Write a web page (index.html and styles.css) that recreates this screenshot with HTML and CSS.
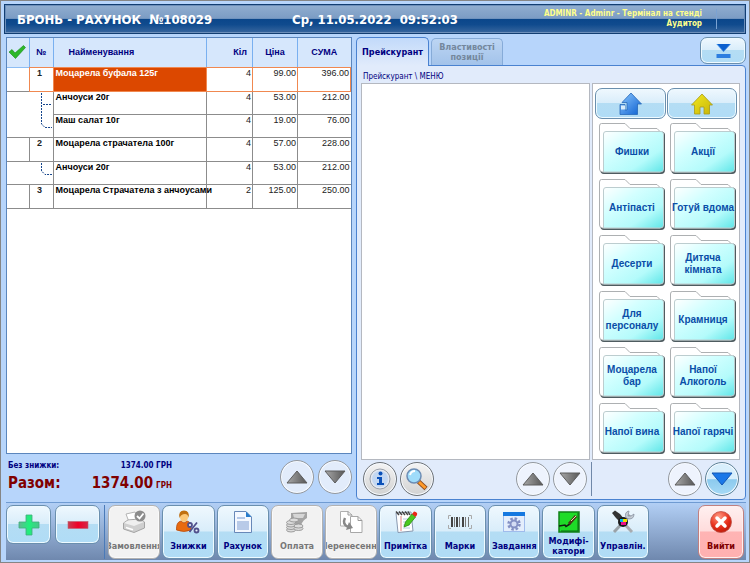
FILE: index.html
```html
<!DOCTYPE html>
<html lang="uk">
<head>
    <meta charset="UTF-8">
    <meta name="viewport" content="width=device-width, initial-scale=1.0">
    <title>Бронь - Рахунок №108029</title>
    <link rel="stylesheet" href="styles.css">
</head>
<body>
    <!-- Shared shapes -->
    <svg class="defs" width="0" height="0" aria-hidden="true">
        <defs>
            <linearGradient id="folder-fill" x1="0" y1="0" x2="1" y2="1">
                <stop offset="0" stop-color="#ffffff"/>
                <stop offset="0.35" stop-color="#d2ffff"/>
                <stop offset="0.7" stop-color="#b4fbfb"/>
                <stop offset="1" stop-color="#5fe6e8"/>
            </linearGradient>
            <linearGradient id="blue-fill" x1="0" y1="0" x2="1" y2="1">
                <stop offset="0" stop-color="#8cc8ff"/>
                <stop offset="1" stop-color="#0b5fd0"/>
            </linearGradient>
            <linearGradient id="gray-fill" x1="0" y1="0" x2="1" y2="0">
                <stop offset="0" stop-color="#a8a8a8"/>
                <stop offset="1" stop-color="#565656"/>
            </linearGradient>
            <linearGradient id="yellow-fill" x1="0" y1="0" x2="1" y2="1">
                <stop offset="0" stop-color="#f2ea20"/>
                <stop offset="1" stop-color="#c8b408"/>
            </linearGradient>
            <linearGradient id="green-fill" x1="0" y1="0" x2="1" y2="0">
                <stop offset="0" stop-color="#62b890"/>
                <stop offset="0.5" stop-color="#1ff07c"/>
                <stop offset="1" stop-color="#4cc48a"/>
            </linearGradient>
            <linearGradient id="red-fill" x1="0" y1="0" x2="1" y2="0">
                <stop offset="0" stop-color="#c83c50"/>
                <stop offset="0.5" stop-color="#f00028"/>
                <stop offset="1" stop-color="#d42848"/>
            </linearGradient>
            <radialGradient id="exit-fill" cx="0.4" cy="0.25" r="0.8">
                <stop offset="0" stop-color="#ff9a84"/>
                <stop offset="0.6" stop-color="#e8301c"/>
                <stop offset="1" stop-color="#b81808"/>
            </radialGradient>
            <symbol id="folder" viewBox="0 0 68 53" preserveAspectRatio="none">
                <path d="M2 47Q2 52 6 52H63Q67 52 67 48V13Q67 10 64 9.500V49H2Z" fill="#4f5c60"/>
                <path d="M1.500 47V4Q1.500 1.500 3.500 1.500H27L32 6.500H59L62 9.500V50H4.500Q1.500 50 1.500 47Z" fill="#fff" stroke="#adb0b2"/>
                <path d="M5.500 50V12Q5.500 9.500 8 9.500H63Q65.500 9.500 65.500 12V47Q65.500 50 62.500 50Z" fill="url(#folder-fill)" stroke="#bccdcf"/>
            </symbol>
            <symbol id="tri-up" viewBox="0 0 22 14">
                <path d="M11 1L21 13H1Z" fill="url(#gray-fill)" stroke="#5c5c5c"/>
            </symbol>
            <symbol id="tri-down" viewBox="0 0 22 14">
                <path d="M1 1H21L11 13Z" fill="url(#gray-fill)" stroke="#5c5c5c"/>
            </symbol>
        </defs>
    </svg>

    <div class="window">
        <header class="titlebar">
            <h1>БРОНЬ - РАХУНОК&nbsp; №108029</h1>
            <div class="clock">Ср, 11.05.2022&nbsp; 09:52:03</div>
            <div class="user">ADMINR - Adminr - Термінал на стенді<br>Аудитор</div>
        </header>

        <main class="workspace">
            <section class="bill">
                <div class="bill-list">
                    <table>
                        <colgroup>
                            <col class="c-mark"><col class="c-num"><col class="c-name">
                            <col class="c-qty"><col class="c-price"><col class="c-sum">
                        </colgroup>
                        <thead>
                            <tr>
                                <th>
                                    <svg width="18" height="14" viewBox="0 0 18 14"><path d="M1 7L4 4.500L7 8L15.500 0.500L17.500 2.500L7.500 13.500Z" fill="#2db82a" stroke="#168a18" stroke-width="0.600"/></svg>
                                </th>
                                <th>№</th>
                                <th class="left">Найменування</th>
                                <th class="right">Кіл</th>
                                <th>Ціна</th>
                                <th>СУМА</th>
                            </tr>
                        </thead>
                        <tbody>
                            <tr class="dish selected">
                                <td></td><td class="num">1</td><td class="name">Моцарела буфала 125г</td><td>4</td><td>99.00</td><td>396.00</td>
                            </tr>
                            <tr>
                                <td class="tree" colspan="2" rowspan="2">
                                    <svg width="46" height="44" viewBox="0 0 46 44"><path d="M34.500 1V32L38 35.500H45M36 12.500H45" fill="none" stroke="#15458c" stroke-width="1" stroke-dasharray="2 1"/></svg>
                                </td>
                                <td class="name">Анчоуси 20г</td><td>4</td><td>53.00</td><td>212.00</td>
                            </tr>
                            <tr>
                                <td class="name">Маш салат 10г</td><td>4</td><td>19.00</td><td>76.00</td>
                            </tr>
                            <tr class="dish">
                                <td></td><td class="num">2</td><td class="name">Моцарела страчатела 100г</td><td>4</td><td>57.00</td><td>228.00</td>
                            </tr>
                            <tr>
                                <td class="tree" colspan="2">
                                    <svg width="46" height="20" viewBox="0 0 46 20"><path d="M34.500 1V9L38 12.500H45" fill="none" stroke="#15458c" stroke-width="1" stroke-dasharray="2 1"/></svg>
                                </td>
                                <td class="name">Анчоуси 20г</td><td>4</td><td>53.00</td><td>212.00</td>
                            </tr>
                            <tr class="dish">
                                <td></td><td class="num">3</td><td class="name">Моцарела Страчатела з анчоусами</td><td>2</td><td>125.00</td><td>250.00</td>
                            </tr>
                        </tbody>
                    </table>
                </div>
                <div class="totals">
                    <dl>
                        <dt class="small">Без знижки:</dt>
                        <dd class="small">1374.00 ГРН</dd>
                        <dt>Разом:</dt>
                        <dd>1374.00<span>ГРН</span></dd>
                    </dl>
                    <button class="round" type="button" aria-label="Вгору"><svg width="22" height="14"><use href="#tri-up"/></svg></button>
                    <button class="round" type="button" aria-label="Вниз"><svg width="22" height="14"><use href="#tri-down"/></svg></button>
                </div>
            </section>

            <section class="catalog">
                <div class="tabs">
                    <button class="tab active" type="button">Прейскурант</button>
                    <button class="tab" type="button">Властивості позиції</button>
                    <button class="glass collapse" type="button" aria-label="Згорнути">
                        <svg width="15" height="14" viewBox="0 0 15 14"><path d="M0 0H15L7.500 8Z" fill="url(#blue-fill)"/><path d="M1 0H14L7.500 7Z" fill="#0a5fce"/><rect x="0.500" y="10" width="14" height="4" fill="#2c7ee0"/></svg>
                    </button>
                </div>
                <div class="panel">
                    <p class="path">Прейскурант \ МЕНЮ</p>
                    <div class="panel-body">
                        <div class="items"></div>
                        <div class="groups">
                            <div class="nav">
                                <button class="glass" type="button" aria-label="На рівень вище">
                                    <svg width="24" height="24" viewBox="0 0 24 24"><path d="M13 1L23.500 12H19.500V22.500H2V12.500H7V18H9V10.500H4Z" fill="url(#blue-fill)" stroke="#2668b8" stroke-width="0.800"/><path d="M3 13.500H7V17.500H3Z" fill="#d9edfa"/></svg>
                                </button>
                                <button class="glass" type="button" aria-label="На початок">
                                    <svg width="22" height="22" viewBox="0 0 22 22"><path d="M11 1L21.500 12H18.500V21H13V14H9V21H3.500V12H0.500Z" fill="url(#yellow-fill)" stroke="#a89a18" stroke-width="0.800"/></svg>
                                </button>
                            </div>
                            <div class="folders" id="folders">
                                <!-- Folder buttons are added by the script -->
                            </div>
                        </div>
                    </div>
                    <div class="panel-foot">
                        <div class="foot-items">
                            <button class="round gray" type="button" aria-label="Інформація">
                                <svg width="22" height="22" viewBox="0 0 22 22"><circle cx="11" cy="11" r="10" fill="#e4e8f0" stroke="#9aa0aa"/><circle cx="11" cy="11" r="8" fill="#c3d7f2"/><circle cx="11.500" cy="5.500" r="2" fill="#0b50b8"/><path d="M8 9H13V15H15V17H8V15H10V11H8Z" fill="#0b50b8"/></svg>
                            </button>
                            <button class="round gray" type="button" aria-label="Пошук">
                                <svg width="24" height="24" viewBox="0 0 24 24"><path d="M13.500 14.500L21 21.500" stroke="#8a4a20" stroke-width="4.500"/><path d="M14 15L20.500 21" stroke="#ff9a28" stroke-width="3"/><circle cx="9" cy="9" r="7" fill="#9fdcfa" stroke="#6c8cb4" stroke-width="1.500"/><path d="M5 8Q6 4 10 4" fill="none" stroke="#fff" stroke-width="2"/></svg>
                            </button>
                            <span class="spacer"></span>
                            <button class="round pale" type="button" aria-label="Вгору"><svg width="22" height="14"><use href="#tri-up"/></svg></button>
                            <button class="round pale" type="button" aria-label="Вниз"><svg width="22" height="14"><use href="#tri-down"/></svg></button>
                        </div>
                        <div class="foot-groups">
                            <button class="round pale" type="button" aria-label="Вгору"><svg width="22" height="14"><use href="#tri-up"/></svg></button>
                            <button class="round blue" type="button" aria-label="Вниз"><svg width="22" height="14" viewBox="0 0 22 14"><path d="M1 1H21L11 13Z" fill="#1a78e8" stroke="#1256b4"/></svg></button>
                        </div>
                    </div>
                </div>
            </section>
        </main>

        <footer class="toolbar">
            <button class="glass step" type="button" aria-label="Додати">
                <svg width="22" height="22" viewBox="0 0 22 22"><path d="M8 1H14V8H21V14H14V21H8V14H1V8H8Z" fill="url(#green-fill)" stroke="#3cae7c" stroke-width="0.800"/></svg>
            </button>
            <button class="glass step" type="button" aria-label="Відняти">
                <svg width="22" height="22" viewBox="0 0 22 22"><rect x="1" y="7.500" width="20" height="7" fill="url(#red-fill)" stroke="#c06070" stroke-width="0.600"/></svg>
            </button>
            <div class="tools">
                <button class="glass tool" type="button" disabled>
                    <svg width="24" height="24" viewBox="0 0 24 24"><path d="M4 4L13 2L17 10L7 12Z" fill="#fff" stroke="#b4b4b4"/><path d="M1.500 13L6 10L17 9L22.500 12V18L12 22.500L1.500 19Z" fill="#cfcfcf" stroke="#a4a4a4"/><path d="M2 13L12 16L22 12L17 9.500L6 10.500Z" fill="#efefef"/><path d="M4 17.500L11 19.800" stroke="#fff" stroke-width="1.500"/><circle cx="18" cy="6" r="5.500" fill="#8c8c8c"/><path d="M15 6L17.500 8.500L21.500 3.500" fill="none" stroke="#fff" stroke-width="1.800"/></svg>
                    <span>Замовлення</span>
                </button>
                <button class="glass tool" type="button">
                    <svg width="24" height="24" viewBox="0 0 24 24"><path d="M0.500 20Q0 12 5 11L8 13L11 11Q16 12 15 20Q8 23 0.500 20Z" fill="#e86a10" stroke="#b84c0c" stroke-width="0.800"/><ellipse cx="8" cy="7" rx="4" ry="5" fill="#fcc878"/><path d="M3.500 8Q2 0.500 8 0.500T12.500 8Q12 4 9 4Q5 4 3.500 8Z" fill="#c07010"/><g fill="#e8f0fc" stroke="#50508c" stroke-width="1.800"><circle cx="14" cy="15" r="2"/><circle cx="20.500" cy="20.500" r="2"/><path d="M21 12.500L13.500 22"/></g></svg>
                    <span>Знижки</span>
                </button>
                <button class="glass tool" type="button">
                    <svg width="24" height="24" viewBox="0 0 24 24"><path d="M3.500 1.500H15L20.500 7V22.500H3.500Z" fill="#f4f8ff" stroke="#6888b8"/><path d="M15 1.500V7H20.500Z" fill="#287ccc"/><rect x="6" y="7" width="8" height="2" fill="#b4c8e8"/><rect x="6" y="11" width="12" height="9" fill="#b8cae8"/></svg>
                    <span>Рахунок</span>
                </button>
                <button class="glass tool" type="button" disabled>
                    <svg width="24" height="24" viewBox="0 0 24 24"><path d="M6 3L22 2V8Q18 10 16 15H11L6 10Z" fill="#a4a4a4"/><path d="M8 4L20 4L18 8L9 8Z" fill="#d6d6d6"/><g fill="#dcdcdc" stroke="#8c8c8c" stroke-width="0.800"><ellipse cx="6" cy="20" rx="4.500" ry="2"/><ellipse cx="6" cy="17.500" rx="4.500" ry="2"/><ellipse cx="6" cy="15" rx="4.500" ry="2"/><ellipse cx="6" cy="12.500" rx="4.500" ry="2"/><ellipse cx="13.500" cy="18.500" rx="4.500" ry="2"/><ellipse cx="13.500" cy="16" rx="4.500" ry="2"/><ellipse cx="9" cy="10" rx="4.500" ry="2"/></g></svg>
                    <span>Оплата</span>
                </button>
                <button class="glass tool" type="button" disabled>
                    <svg width="24" height="24" viewBox="0 0 24 24"><path d="M1.500 1.500H9L13 5V16H1.500Z" fill="#fff" stroke="#b0b0b0"/><path d="M11.500 6.500H19L23 10.500V22.500H11.500Z" fill="#fff" stroke="#a8a8a8"/><path d="M19 6.500V10.500H23M9 1.500V5H13" fill="none" stroke="#999"/><path d="M6 8Q3 14 9 17" fill="none" stroke="#888" stroke-width="2.500"/><path d="M7 20L14 18L10 12Z" fill="#888"/></svg>
                    <span>Перенесення</span>
                </button>
                <button class="glass tool" type="button">
                    <svg width="24" height="24" viewBox="0 0 24 24"><path d="M2 3L17 2L19 21L4 22.500Z" fill="#fff" stroke="#8898b0"/><path d="M7 6V21" stroke="#e08080"/><path d="M9 9H16M9 12H16M9 15H16M9 18H16" stroke="#b8cce4"/><path d="M2 1.500L5 5M5 1.500L8 5M8 1.500L11 5M11 1.500L14 5M14 1.500L16 5" stroke="#444" stroke-width="1.500"/><path d="M10 17L11.500 12L18 4L21.500 7L15 15Z" fill="#4cc820" stroke="#2a8c14" stroke-width="0.800"/><path d="M18 4L20 1.500Q24 2 23 5L21.500 7Z" fill="#e82818"/></svg>
                    <span>Примітка</span>
                </button>
                <button class="glass tool" type="button">
                    <svg width="24" height="24" viewBox="0 0 24 24"><path d="M3 5.500H0.500V9M21 5.500H23.500V9M3 18.500H0.500V15M21 18.500H23.500V15" fill="none" stroke="#aaa"/><path d="M4 7V17M9 7V17M15 7V17" stroke="#444" stroke-width="2"/><path d="M6.500 7V17M11.500 7V17M17.500 7V17M20.500 7V17" stroke="#777"/></svg>
                    <span>Марки</span>
                </button>
                <button class="glass tool" type="button">
                    <svg width="24" height="24" viewBox="0 0 24 24"><rect x="1.500" y="2.500" width="21" height="19" fill="#e4eefc" stroke="#a0bcec"/><rect x="1" y="2" width="22" height="4" fill="#1478e0"/><circle cx="12" cy="14" r="5.500" fill="none" stroke="#8490c4" stroke-width="2.500" stroke-dasharray="2.500 1.800"/><circle cx="12" cy="14" r="3.500" fill="#d4dcf4" stroke="#8490c4" stroke-width="2"/></svg>
                    <span>Завдання</span>
                </button>
                <button class="glass tool" type="button">
                    <svg width="24" height="24" viewBox="0 0 24 24"><rect x="2" y="2" width="20" height="20" fill="#1edc28" stroke="#108018" stroke-width="1.500"/><path d="M21 3V21H4" fill="none" stroke="#0a6812"/><path d="M2 16L8 15L9 16.500L13 14" fill="none" stroke="#102010" stroke-width="1.500"/><path d="M12 14L19 6" stroke="#4a3818" stroke-width="3"/><path d="M14 11L19 6" stroke="#e8d8b0"/></svg>
                    <span>Модифі-<br>катори</span>
                </button>
                <button class="glass tool" type="button">
                    <svg width="24" height="24" viewBox="0 0 24 24"><path d="M3 22L19 5" stroke="#9aa2a8" stroke-width="3"/><path d="M17 6L18 1Q13 2 15 8L18 9Q23 9 23 4L20 6Z" fill="#c4ccd4" stroke="#8890a0" stroke-width="0.800"/><path d="M5 5L21 22" stroke="#a8acb0" stroke-width="3"/><path d="M1 3L4 0.500L9 4L13 9L9 12L5 8Z" fill="#333"/><circle cx="12" cy="12" r="5" fill="#1a1a1a"/><path d="M9 9H12V12H9Z" fill="#00b8f0"/><path d="M12 9H16V12H12Z" fill="#f0e000"/><path d="M10 12H15V15H10Z" fill="#e8108c"/></svg>
                    <span>Управлін.</span>
                </button>
            </div>
            <button class="glass tool exit" type="button">
                <svg width="24" height="24" viewBox="0 0 24 24"><circle cx="12" cy="12" r="10.500" fill="url(#exit-fill)" stroke="#c05048" stroke-width="0.800"/><path d="M8 8L16 16M16 8L8 16" stroke="#fff" stroke-width="3.500" stroke-linecap="round"/></svg>
                <span>Вийти</span>
            </button>
        </footer>
    </div>

    <script>
        const groups = [
            'Фишки', 'Акції',
            'Антіпасті', 'Готуй вдома',
            'Десерти', 'Дитяча кімната',
            'Для персоналу', 'Крамниця',
            'Моцарела бар', 'Напої Алкоголь',
            'Напої вина', 'Напої гарячі'
        ];

        // Render the group folders
        document.getElementById('folders').innerHTML = groups.map(name => `
            <button class="folder" type="button">
                <svg aria-hidden="true"><use href="#folder"/></svg>
                <span>${name}</span>
            </button>
        `).join('');
    </script>
</body>
</html>
```
FILE: styles.css
```css
* {
    box-sizing: border-box;
}

body {
    margin: 0;
    font-family: "DejaVu Sans Condensed", "DejaVu Sans", sans-serif;
    font-size: 9px;
    color: #000080;
}

button {
    font: inherit;
    color: inherit;
    margin: 0;
    padding: 0;
    cursor: pointer;
}

svg {
    display: block;
}

.defs {
    position: absolute;
}

.window {
    display: flex;
    flex-direction: column;
    min-height: 100vh;
    padding: 3px 3px 2px;
    border: 1px solid #858585;
    background: #b7d5fb;
}

/* Title bar */
.titlebar {
    display: grid;
    grid-template-columns: 1fr auto 1fr;
    align-items: center;
    height: 30px;
    padding: 0 12px;
    border: 1px solid #123e72;
    box-shadow: inset 0 0 0 1px #6d8fba;
    background: linear-gradient(#91aed0, #7b9cc4 48%, #0a468a 50%, #104b8e 70%, #39679e);
    color: #fff;
    font-weight: bold;
}

.titlebar h1 {
    margin: 0;
    font-size: 13px;
    white-space: nowrap;
}

.clock {
    font-size: 13px;
    white-space: nowrap;
}

.user {
    justify-self: end;
    margin-right: 16px;
    padding-right: 14px;
    border-right: 1px solid #7ba2d2;
    font-size: 8px;
    line-height: 10px;
    text-align: right;
    white-space: nowrap;
    color: #ffff8c;
}

/* Two main columns */
.workspace {
    flex: 1;
    display: grid;
    grid-template-columns: 346fr 390fr;
    gap: 4px;
    padding: 3px 0 2px 2px;
}

.bill {
    display: flex;
    flex-direction: column;
    min-width: 0;
}

.bill-list {
    flex: 1;
    border: 1px solid #5b86bd;
    background: #fff;
}

table {
    width: 100%;
    table-layout: fixed;
    border-collapse: collapse;
    font-family: "Liberation Sans", Arial, sans-serif;
    font-size: 9px;
}

.c-mark { width: 22px; }
.c-num { width: 24px; }
.c-qty { width: 46px; }
.c-price { width: 45px; }
.c-sum { width: 53px; }

th {
    height: 29px;
    padding: 0 2px;
    border-right: 1px solid #79b0f0;
    border-bottom: 1px solid #8dbdf4;
    background: #d6e7fc;
    text-align: center;
}

th.left {
    padding-left: 15px;
    text-align: left;
}

th.right {
    padding-right: 5px;
    text-align: right;
}

td {
    height: 23px;
    padding: 0 1px;
    border: 1px solid #8c8c8c;
    vertical-align: top;
    text-align: right;
    line-height: 11px;
    white-space: nowrap;
    color: #222;
}

.dish td {
    height: 24px;
}

th:first-child,
td:first-child:not(.name) {
    border-left: none;
}

th:first-child {
    padding: 0 1px;
}

th:last-child,
td:last-child {
    border-right: none;
}

td.num {
    padding-right: 4px;
    text-align: center;
    font-weight: bold;
}

td.name {
    padding: 0 0 0 2px;
    text-align: left;
    font-weight: bold;
    color: #000;
}

td.tree {
    padding: 0;
}

/* double wins over the solid borders of the rows around it */
.selected td:not(:first-child) {
    border: 1px double #f08850;
}

.selected td.name {
    background: #dc4800;
    color: #fff;
}

/* Totals */
.totals {
    display: flex;
    align-items: center;
    gap: 4px;
    height: 46px;
}

.totals dl {
    flex: 1;
    display: grid;
    grid-template-columns: 62px 102px;
    align-items: baseline;
    margin: 0;
    padding-left: 2px;
    font-size: 15px;
    line-height: 20px;
    font-weight: bold;
    color: #800000;
}

.totals dd {
    margin: 0;
    text-align: right;
}

.totals span {
    margin-left: 3px;
    font-size: 8px;
}

.totals .small {
    font-size: 8px;
    line-height: 14px;
    color: #000080;
}

/* Buttons */
.round {
    display: grid;
    place-items: center;
    flex: none;
    width: 34px;
    height: 34px;
    border: 1px solid #94999f;
    border-radius: 50%;
    background: #e2ecfb;
    box-shadow: inset 0 0 0 1px #f6faff;
}

.round.gray {
    border-color: #6e7378;
    background: linear-gradient(#f4f4f4, #d2d2d2);
}

.round.pale {
    background: #eef3fd;
}

.round.blue {
    border-color: #5f8296;
    background: linear-gradient(#d8effc 50%, #8ccaee 52%, #a6daf6);
}

.glass {
    display: flex;
    align-items: center;
    justify-content: center;
    border: 1px solid #6a8fae;
    border-radius: 7px;
    background: linear-gradient(#eff8fe, #d9edfa 48%, #b4ddf4 50%, #b0dcf6);
    box-shadow: inset 0 0 0 1px #eefaff;
}

/* Catalog */
.catalog {
    display: flex;
    flex-direction: column;
    min-width: 0;
}

.tabs {
    display: flex;
    align-items: flex-end;
    gap: 2px;
    height: 28px;
}

.tab {
    width: 72px;
    height: 27px;
    border: 1px solid #86abd8;
    border-bottom: none;
    border-radius: 5px 5px 0 0;
    background: linear-gradient(#bcd5f3, #a3c3ea);
    font-weight: bold;
    line-height: 10px;
    color: #74879c;
}

.tab.active {
    z-index: 1;
    width: 73px;
    height: 29px;
    margin-bottom: -1px;
    border-color: #4a82d0;
    background: linear-gradient(#c2dafa, #e1ebfb);
    color: #000080;
}

.collapse {
    align-self: flex-start;
    width: 46px;
    height: 27px;
    margin-left: auto;
}

.panel {
    flex: 1;
    display: flex;
    flex-direction: column;
    padding: 5px 5px 3px 4px;
    border: 1px solid #4a82d0;
    border-radius: 0 4px 4px 4px;
    background: #e1ebfb;
}

.path {
    margin: 0;
    padding-left: 2px;
    font-size: 8px;
    line-height: 12px;
}

.panel-body {
    flex: 1;
    display: grid;
    grid-template-columns: 1fr 148px;
    gap: 2px;
}

.items,
.groups {
    border: 1px solid #b4b8c0;
    background: #fff;
}

.groups {
    padding: 4px 2px;
}

.nav {
    display: grid;
    grid-template-columns: 1fr 1fr;
    gap: 1px;
    margin-bottom: 3px;
}

.nav .glass {
    height: 31px;
}

.folders {
    display: grid;
    grid-template-columns: 1fr 1fr;
    gap: 3px;
    padding-left: 3px;
}

.folder {
    position: relative;
    height: 53px;
    border: none;
    background: none;
    font-family: "Liberation Sans", Arial, sans-serif;
    font-size: 10px;
    line-height: 12px;
    font-weight: bold;
    color: #0a4ea8;
}

.folder svg {
    position: absolute;
    inset: 0;
    width: 100%;
    height: 100%;
}

.folder span {
    position: relative;
    display: block;
    padding-top: 6px;
}

.panel-foot {
    display: grid;
    grid-template-columns: 1fr 148px;
    padding-top: 2px;
}

.foot-items,
.foot-groups {
    display: flex;
    gap: 3px;
}

.foot-items {
    padding: 0 4px 0 2px;
    border-right: 1px solid #7088a8;
}

.foot-groups {
    justify-content: flex-end;
    padding-right: 1px;
}

.spacer {
    flex: 1;
}

/* Bottom toolbar */
.toolbar {
    display: flex;
    align-items: flex-start;
    gap: 4px;
    margin-left: 2px;
    padding: 2px 2px 1px 0;
    border-top: 1px solid #6f9bd2;
    background: linear-gradient(#b2cff5, #6f88ae);
}

.step {
    width: 45px;
    height: 39px;
}

.tools {
    flex: 1;
    display: grid;
    grid-template-columns: repeat(10, minmax(0, 1fr));
    gap: 2px;
    margin-right: 45px;
    padding-left: 3px;
    border-left: 1px solid #4a7ab8;
}

.tool {
    flex-direction: column;
    justify-content: flex-start;
    height: 54px;
    padding-top: 4px;
    overflow: hidden;
    font-weight: bold;
    line-height: 10px;
}

.tool svg {
    flex: none;
}

.tool span {
    display: flex;
    flex: 1;
    align-items: center;
    white-space: nowrap;
}

.tool:disabled {
    border-color: #b2b2b2;
    background: #f2f2f2;
    box-shadow: inset 0 0 0 1px #fafafa;
    color: #777;
}

.exit {
    width: 46px;
    border-color: #c08080;
    background: linear-gradient(#fff0f0, #ffdcdc 48%, #ffb4b4 50%, #ffb0b0);
    box-shadow: inset 0 0 0 1px #fff0f0;
    color: #800000;
}
```
